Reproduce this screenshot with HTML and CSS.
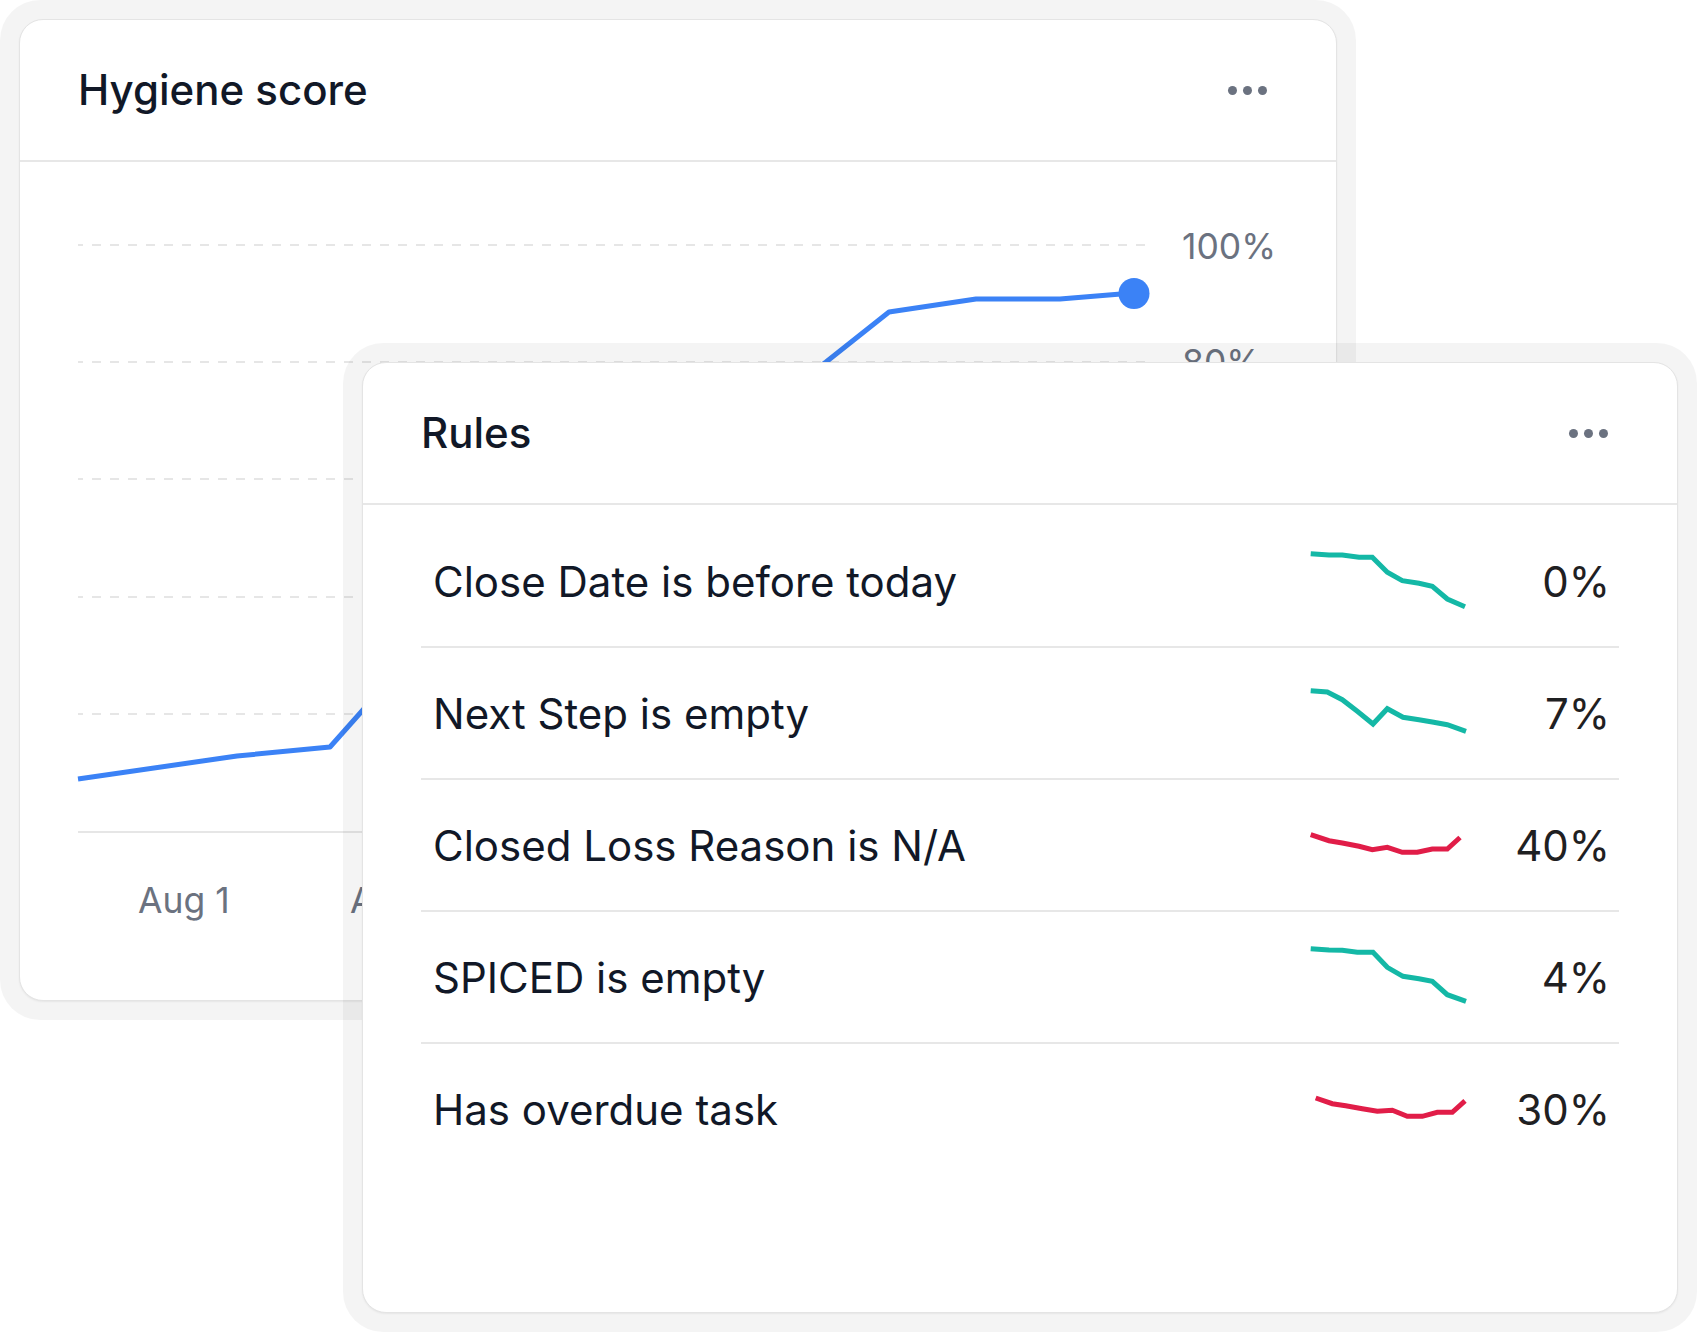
FILE: index.html
```html
<!DOCTYPE html>
<html lang="en">
<head>
<meta charset="utf-8">
<title>Hygiene score</title>
<link rel="stylesheet" href="styles.css">
</head>
<body>
<div class="stage">
  <section class="frame frame-score">
    <div class="card">
      <header class="card-head">
        <h2 class="card-title">Hygiene score</h2>
        <div class="more" aria-label="More"><span></span><span></span><span></span></div>
      </header>
      <div class="chart-body">
        <svg class="chart" width="1316" height="837" viewBox="0 0 1316 837">
          <g class="grid">
            <line x1="58" y1="83" x2="1126" y2="83"/>
            <line x1="58" y1="200" x2="1126" y2="200"/>
            <line x1="58" y1="317" x2="1126" y2="317"/>
            <line x1="58" y1="435" x2="1126" y2="435"/>
            <line x1="58" y1="552" x2="1126" y2="552"/>
          </g>
          <line class="axis" x1="58" y1="670" x2="1126" y2="670"/>
          <g class="ylabels">
            <text x="1162" y="97">100%</text>
            <text x="1162" y="213">80%</text>
            <text x="1162" y="330">60%</text>
            <text x="1162" y="448">40%</text>
            <text x="1162" y="565">20%</text>
          </g>
          <g class="xlabels">
            <text x="118" y="751">Aug 1</text>
            <text x="330" y="751">Aug 8</text>
            <text x="543" y="751">Aug 15</text>
            <text x="756" y="751">Aug 22</text>
            <text x="969" y="751">Aug 29</text>
          </g>
          <polyline class="score-line" points="58,617 217,594 310,585 350,540 806,200 869,150 956,137 1040,137 1113,131"/>
          <circle class="score-dot" cx="1114" cy="131.5" r="15.5"/>
        </svg>
      </div>
    </div>
  </section>

  <section class="frame frame-rules">
    <div class="card">
      <header class="card-head">
        <h2 class="card-title">Rules</h2>
        <div class="more" aria-label="More"><span></span><span></span><span></span></div>
      </header>
      <ul class="rules">
        <li class="rule">
          <span class="rule-name">Close Date is before today</span>
          <svg class="spark" width="160" height="60" viewBox="0 0 160 60"><polyline class="good" points="3.7,2.7 22,4 35.3,4 52,6.3 65.3,6.3 80.3,21.3 95.3,29.7 112,32.3 125.3,35.3 140.3,48 158,55.7"/></svg>
          <span class="rule-pct">0%</span>
        </li>
        <li class="rule">
          <span class="rule-name">Next Step is empty</span>
          <svg class="spark" width="160" height="60" viewBox="0 0 160 60"><polyline class="good" points="3.7,7.7 20.3,9 35.3,16.7 50.3,28.3 66,41 80.3,25.7 96,34.3 112,36.7 125.3,39 140.3,41.7 159,48.3"/></svg>
          <span class="rule-pct">7%</span>
        </li>
        <li class="rule">
          <span class="rule-name">Closed Loss Reason is N/A</span>
          <svg class="spark" width="160" height="60" viewBox="0 0 160 60"><polyline class="bad" points="3.7,19.7 22,25.7 35.3,28 52,31.3 65.3,34.7 80.3,32.3 95.3,37.3 110.3,37.3 125.3,34 140.3,34 153,22.5"/></svg>
          <span class="rule-pct">40%</span>
        </li>
        <li class="rule">
          <span class="rule-name">SPICED is empty</span>
          <svg class="spark" width="160" height="60" viewBox="0 0 160 60"><polyline class="good" points="3.7,1.7 22,3 35.3,3.3 50.3,5.3 66,5.3 80.3,20.3 96,29.3 112,31.7 125.3,34.3 140.3,47.7 159,54.3"/></svg>
          <span class="rule-pct">4%</span>
        </li>
        <li class="rule">
          <span class="rule-name">Has overdue task</span>
          <svg class="spark" width="160" height="60" viewBox="0 0 160 60"><polyline class="bad" points="8.7,19 25.3,24.7 38.7,26.7 55.3,29.7 70.3,32.3 85.3,31.3 100.3,37.3 115.3,37.3 130.3,33.3 145.3,33.3 158,21.8"/></svg>
          <span class="rule-pct">30%</span>
        </li>
      </ul>
    </div>
  </section>
</div>
</body>
</html>
```

FILE: styles.css
```css
html, body {
  margin: 0;
  padding: 0;
  background: #ffffff;
}

body {
  width: 1704px;
  height: 1332px;
  overflow: hidden;
  font-family: Inter, "Noto Sans", "Liberation Sans", sans-serif;
  color: #111827;
}

.stage {
  position: relative;
  width: 1704px;
  height: 1332px;
}

.frame {
  box-sizing: border-box;
  padding: 19px;
  border-radius: 40px;
  background: rgba(0, 0, 0, 0.045);
}

.frame-score {
  width: 1356px;
  height: 1020px;
}

.frame-rules {
  position: absolute;
  left: 343px;
  top: 343px;
  width: 1354px;
  height: 989px;
}

.card {
  box-sizing: border-box;
  height: 100%;
  background: #ffffff;
  border: 1px solid #e4e4e4;
  border-radius: 24px;
  box-shadow: 0 1px 2px rgba(0, 0, 0, 0.06);
  overflow: hidden;
  display: flex;
  flex-direction: column;
}

.card-head {
  flex: none;
  height: 140px;
  display: flex;
  align-items: center;
  justify-content: space-between;
  padding: 0 69px 0 58px;
  border-bottom: 2px solid #e7e7e7;
}

.card-title {
  margin: 0;
  font-size: 42px;
  font-weight: 500;
  line-height: 1;
  color: #111827;
}

.more {
  display: flex;
  gap: 6px;
}

.more span {
  width: 9px;
  height: 9px;
  border-radius: 50%;
  background: #6b7280;
}

.chart-body {
  flex: 1;
}

.chart {
  display: block;
  overflow: visible;
}

.grid line {
  stroke: #e6e6e6;
  stroke-width: 2;
  stroke-dasharray: 9 9;
  stroke-dashoffset: 4;
}

.axis {
  stroke: #e6e6e6;
  stroke-width: 2;
}

.ylabels text,
.xlabels text {
  font-family: Inter, "Noto Sans", sans-serif;
  font-size: 35.5px;
  fill: #6b7280;
}

.score-line {
  fill: none;
  stroke: #3b82f6;
  stroke-width: 5;
  stroke-linejoin: round;
}

.score-dot {
  fill: #3b82f6;
}

.rules {
  list-style: none;
  margin: 0;
  padding: 11px 58px 0;
}

.rule {
  display: flex;
  align-items: center;
  height: 130px;
  border-bottom: 2px solid #e7e7e7;
}

.rule:last-child {
  border-bottom: none;
}

.rule-name {
  flex: 1;
  padding-left: 12px;
  font-size: 42px;
  font-weight: 400;
  color: #111827;
}

.spark {
  flex: none;
  display: block;
  overflow: visible;
}

.spark polyline {
  fill: none;
  stroke-width: 5;
  stroke-linejoin: miter;
}

.spark .good {
  stroke: #14b8a6;
}

.spark .bad {
  stroke: #e11d48;
}

.rule-pct {
  flex: none;
  width: 143px;
  padding-right: 9px;
  text-align: right;
  font-size: 42px;
  font-weight: 400;
  color: #1f2022;
}
```
